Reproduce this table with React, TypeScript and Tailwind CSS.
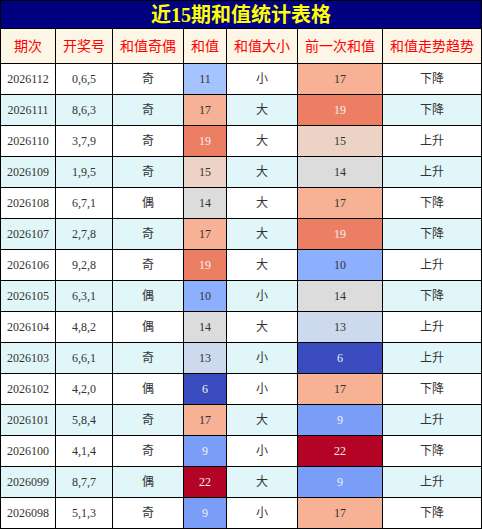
import React from "react";

type Row = [string, string, string, number, string, number, string];

const rows: Row[] = [
  ["2026112", "0,6,5", "奇", 11, "小", 17, "下降"],
  ["2026111", "8,6,3", "奇", 17, "大", 19, "下降"],
  ["2026110", "3,7,9", "奇", 19, "大", 15, "上升"],
  ["2026109", "1,9,5", "奇", 15, "大", 14, "上升"],
  ["2026108", "6,7,1", "偶", 14, "大", 17, "下降"],
  ["2026107", "2,7,8", "奇", 17, "大", 19, "下降"],
  ["2026106", "9,2,8", "奇", 19, "大", 10, "上升"],
  ["2026105", "6,3,1", "偶", 10, "小", 14, "下降"],
  ["2026104", "4,8,2", "偶", 14, "大", 13, "上升"],
  ["2026103", "6,6,1", "奇", 13, "小", 6, "上升"],
  ["2026102", "4,2,0", "偶", 6, "小", 17, "下降"],
  ["2026101", "5,8,4", "奇", 17, "大", 9, "上升"],
  ["2026100", "4,1,4", "奇", 9, "小", 22, "下降"],
  ["2026099", "8,7,7", "偶", 22, "大", 9, "上升"],
  ["2026098", "5,1,3", "奇", 9, "小", 17, "下降"],
];

const heat: Record<number, string> = {
  6: "bg-[#3b4cc0] text-[#f1f1f1]",
  9: "bg-[#7a9df8] text-[#f1f1f1]",
  10: "bg-[#8db0fe] text-[#333333]",
  11: "bg-[#a5c3fe] text-[#333333]",
  13: "bg-[#cdd9ec] text-[#333333]",
  14: "bg-[#dddcdc] text-[#333333]",
  15: "bg-[#ecd3c5] text-[#333333]",
  17: "bg-[#f7b194] text-[#333333]",
  19: "bg-[#ec7f63] text-[#f1f1f1]",
  22: "bg-[#b40426] text-[#f1f1f1]",
};

const headers = ["期次", "开奖号", "和值奇偶", "和值", "和值大小", "前一次和值", "和值走势趋势"];

const font = "font-['Liberation_Serif','Noto_Sans_CJK_SC',serif]";

export default function App() {
  return (
    <div className={`w-[482px] bg-black p-px grid gap-px grid-cols-[54px_56px_70px_42px_70px_84px_98px] ${font}`}>
      <div className="col-span-7 h-[27px] bg-[#000080] text-[#ffff00] font-bold text-[20px] flex items-center justify-center leading-none">
        近15期和值统计表格
      </div>
      {headers.map((h) => (
        <div
          key={h}
          className="h-[34px] bg-[#fdf5e6] text-[#ff0000] text-[14px] flex items-center justify-center"
        >
          {h}
        </div>
      ))}
      {rows.map((r, i) => {
        const bg = i % 2 === 0 ? "bg-white" : "bg-[#e0f6f8]";
        const cell = `h-[30px] flex items-center justify-center text-[12px] text-[#333333]`;
        return (
          <React.Fragment key={r[0]}>
            <div className={`${cell} ${bg}`}>{r[0]}</div>
            <div className={`${cell} ${bg}`}>{r[1]}</div>
            <div className={`${cell} ${bg} text-[#222222]`}>{r[2]}</div>
            <div className={`h-[30px] flex items-center justify-center text-[12px] ${heat[r[3]]}`}>{r[3]}</div>
            <div className={`${cell} ${bg} text-[#222222]`}>{r[4]}</div>
            <div className={`h-[30px] flex items-center justify-center text-[12px] ${heat[r[5]]}`}>{r[5]}</div>
            <div className={`${cell} ${bg} text-[#222222]`}>{r[6]}</div>
          </React.Fragment>
        );
      })}
    </div>
  );
}
